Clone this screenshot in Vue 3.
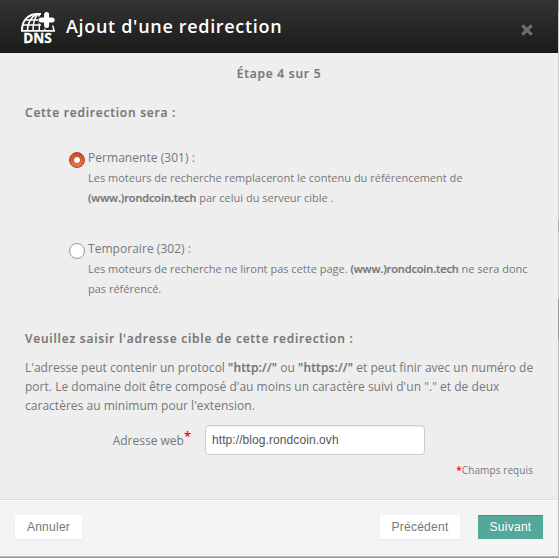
<script setup>
import { ref } from 'vue'

const mode = ref('301')
const address = ref('http://blog.rondcoin.ovh')
</script>

<template>
  <div class="backdrop">
    <section class="modal">
      <header class="head">
        <svg class="logo" width="36" height="40" viewBox="0 0 36 40">
          <g fill="none" stroke="#fff" stroke-width="1.5">
            <path d="M2 19.500C2 8.500 9 3 17.500 3L21 3" stroke-width="2" />
            <path d="M7.500 19.500C7.500 11 12 5 17 3.200" />
            <path d="M13 19.500C13 12 15 6 18 3.200" />
            <path d="M19.300 3V19.500" />
            <path d="M5.500 9H19M3 14H21" />
            <path d="M24.800 14V19.500M32.500 14.500Q33.800 17 33.800 19.600" />
            <path d="M1 19.900H35" stroke-width="1.800" />
          </g>
          <path d="M26.600 1V17.800M18.400 9H34.800" stroke="#262626" stroke-width="6.800" />
          <path d="M26.600 3.400V14.600M21.200 9H32.200" stroke="#fff" stroke-width="5" stroke-linecap="round" />
          <text x="3.200" y="32.300" textLength="28.500" lengthAdjust="spacingAndGlyphs">DNS</text>
        </svg>
        <h1>Ajout d'une redirection</h1>
        <svg class="close" width="12" height="12" viewBox="0 0 12 12">
          <path d="M2.400 2.400L9.600 9.600M9.600 2.400L2.400 9.600" stroke="#6e6e6e" stroke-width="3.200" stroke-linecap="square" />
        </svg>
      </header>
      <main class="body">
        <h2 class="step">Étape 4 sur 5</h2>
        <h3 class="q">Cette redirection sera :</h3>
        <label class="choice">
          <input v-model="mode" type="radio" value="301" name="mode">
          <span>
            <span class="name">Permanente (301) :</span>
            <span class="desc">Les moteurs de recherche remplaceront le contenu du référencement de<br><b>(www.)rondcoin.tech</b> par celui du serveur cible .</span>
          </span>
        </label>
        <label class="choice">
          <input v-model="mode" type="radio" value="302" name="mode">
          <span>
            <span class="name">Temporaire (302) :</span>
            <span class="desc">Les moteurs de recherche ne liront pas cette page. <b>(www.)rondcoin.tech</b> ne sera donc<br>pas référencé.</span>
          </span>
        </label>
        <h3 class="q target">Veuillez saisir l'adresse cible de cette redirection :</h3>
        <p class="help">L'adresse peut contenir un protocol <b>"http://"</b> ou <b>"https://"</b> et peut finir avec un numéro de<br>port. Le domaine doit être composé d'au moins un caractère suivi d'un "." et de deux<br>caractères au minimum pour l'extension.</p>
        <div class="field">
          <label for="addr">Adresse web<i>*</i></label>
          <input id="addr" v-model="address" type="text" spellcheck="false">
        </div>
        <p class="required"><i>*</i>Champs requis</p>
      </main>
      <footer class="foot">
        <button class="cancel">Annuler</button>
        <button class="prev">Précédent</button>
        <button class="next">Suivant</button>
      </footer>
    </section>
  </div>
</template>

<style>
body { margin: 0; overflow: hidden; }
</style>

<style scoped>
* { box-sizing: border-box; }
.backdrop {
  width: 559px;
  height: 558px;
  background: linear-gradient(#aaa 0 12px, #ccc 12px 220px, #aaa 220px 232px, #ccc 232px 299px, #999 299px 340px, #bbb 340px);
  font-family: "Open Sans", sans-serif;
  color: #777;
}
.modal {
  display: flex;
  flex-direction: column;
  width: 558px;
  height: 556px;
  background: #eee;
  box-shadow: 0 1px 0 #bbb, 0 2px 0 #999;
}
.head {
  display: flex;
  flex: none;
  height: 53px;
  padding: 11px 25px 0 20px;
  background: linear-gradient(#333, #1b1b1b);
  border-bottom: 1px solid #151313;
}
.logo { flex: none; }
.logo text { font: 700 14px "Open Sans", sans-serif; fill: #fff; stroke: #fff; stroke-width: .3px; }
h1, h2, h3, p { margin: 0; white-space: nowrap; }
h1 {
  margin-left: 10px;
  font-size: 18px;
  font-weight: 600;
  line-height: 30px;
  letter-spacing: .68px;
  color: #fff;
}
.close { margin: 13px 0 0 auto; }
.body { flex: none; height: 446px; padding: 11px 25px 0; }
h2, h3 { font-size: 12px; font-weight: 600; line-height: 20px; letter-spacing: .78px; -webkit-text-stroke: .2px #777; }
.step { text-align: center; }
.q { margin-top: 19px; }
b { font-weight: 600; -webkit-text-stroke: .2px #777; }
.choice {
  display: flex;
  gap: 3px;
  height: 71px;
  margin: 25px 0 0 44px;
  white-space: nowrap;
}
.choice + .choice { margin-top: 20px; height: 62px; }
.choice input {
  flex: none;
  appearance: none;
  width: 16px;
  height: 16px;
  margin: 4px 0 0;
  border: 1px solid #999;
  border-radius: 50%;
  background: #fff;
}
.choice input:checked {
  border-color: #a6431f;
  background: radial-gradient(circle, #fff 0 2.500px, transparent 3.300px), linear-gradient(#c24d21, #e37a50);
}
.name { display: block; font-size: 12px; line-height: 20px; letter-spacing: .04px; }
.desc { display: block; font-size: 11px; line-height: 20px; }
.desc b { letter-spacing: -.12px; }
.target { margin-top: 28px; }
.help { margin-top: 9px; font-size: 12px; line-height: 19px; letter-spacing: .02px; }
.help b { letter-spacing: .15px; }
.field { display: flex; margin-top: 10px; }
.field label {
  width: 166px;
  padding-top: 6px;
  text-align: right;
  font-size: 12px;
  line-height: 20px;
}
.field i { font: 600 13px/10px "Open Sans", sans-serif; color: #f00; vertical-align: 4px; }
.field input {
  width: 220px;
  height: 30px;
  margin-left: 14px;
  padding: 0 6px;
  border: 1px solid #ccc;
  border-radius: 4px;
  background: #fff;
  box-shadow: inset 0 1px 1px rgba(0, 0, 0, .075);
  font: 12px "Liberation Sans", Arial, sans-serif;
  letter-spacing: .08px;
  color: #555;
}
.required { margin-top: 5px; text-align: right; font-size: 10px; line-height: 20px; letter-spacing: .09px; }
.required i { font-style: normal; font-weight: 600; color: #f00; }
.foot {
  display: flex;
  flex: 1;
  gap: 18px;
  padding: 15px 15px 0;
  border-top: 1px solid #ddd;
  background: #f4f4f4;
  box-shadow: inset 0 1px 0 #fff;
}
.foot button {
  height: 24px;
  padding: 0;
  border: 0;
  background: #fff;
  box-shadow: 0 1px 2px rgba(0, 0, 0, .05);
  font: 12px "Liberation Sans", Arial, sans-serif;
  letter-spacing: .25px;
  color: #777;
}
.cancel { width: 67px; margin-right: auto; }
.prev { width: 80px; }
.foot .next { width: 65px; background: #53a79b; color: #fff; box-shadow: inset 0 1px 0 #459085; }
</style>
